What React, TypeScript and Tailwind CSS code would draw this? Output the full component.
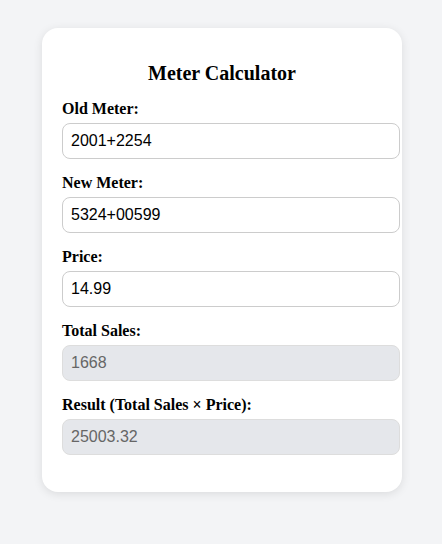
import React from "react";

const fields = [
  { label: "Old Meter:", value: "2001+2254", ro: false },
  { label: "New Meter:", value: "5324+00599", ro: false },
  { label: "Price:", value: "14.99", ro: false },
  { label: "Total Sales:", value: "1668", ro: true },
  { label: "Result (Total Sales × Price):", value: "25003.32", ro: true },
];

export default function App() {
  return (
    <div className="min-h-[544px] bg-[#f3f4f6] pt-[28px] pl-[42px] font-['Liberation_Serif',serif] text-black">
      <div className="w-[360px] rounded-[16px] bg-white px-[20px] pt-[20px] pb-[22px] shadow-[0_2px_10px_rgba(0,0,0,0.1)]">
        <h2 className="mt-[14px] mb-[15px] text-center text-[20px] leading-[23px] font-bold">Meter Calculator</h2>
        {fields.map((f) => (
          <div key={f.label} className="mb-[15px]">
            <label className="mb-[5px] block text-[16px] leading-[18px] font-bold">{f.label}</label>
            <input
              readOnly
              value={f.value}
              className={
                f.ro
                  ? "block h-[36px] w-[338px] rounded-[8px] border border-[#dddddd] bg-[#e5e7eb] px-[8px] font-['Liberation_Sans',Arial,sans-serif] text-[16px] text-[#666666] outline-none"
                  : "block h-[36px] w-[338px] rounded-[8px] border border-[#cccccc] bg-white px-[8px] font-['Liberation_Sans',Arial,sans-serif] text-[16px] text-black outline-none"
              }
            />
          </div>
        ))}
      </div>
    </div>
  );
}
